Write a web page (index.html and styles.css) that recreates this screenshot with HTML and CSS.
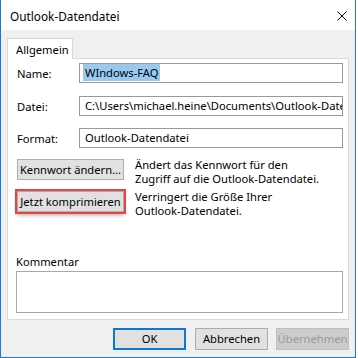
FILE: index.html
```html
<!DOCTYPE html>
<html lang="de">
<head>
<meta charset="utf-8">
<title>Outlook-Datendatei</title>
<link rel="stylesheet" href="styles.css">
</head>
<body>
<div class="window">
  <div class="titlebar">
    <span class="title">Outlook-Datendatei</span>
    <svg class="close" width="10" height="10" viewBox="0 0 10 10"><path d="M0.5 0.5L9.5 9.5M9.5 0.5L0.5 9.5" stroke="#000" stroke-width="1" fill="none"/></svg>
  </div>
  <div class="content">
    <div class="tabs"><div class="tab">Allgemein</div></div>
    <div class="panel">
      <div class="row row-name">
        <span class="label">Name:</span>
        <div class="input"><span class="sel">WIndows-FAQ</span></div>
      </div>
      <div class="row row-file">
        <span class="label">Datei:</span>
        <div class="input">C:\Users\michael.heine\Documents\Outlook-Datendatei.pst</div>
      </div>
      <div class="row row-format">
        <span class="label">Format:</span>
        <div class="input">Outlook-Datendatei</div>
      </div>
      <div class="action action-pw">
        <div class="btn">Kennwort ändern...</div>
        <p class="desc">Ändert das Kennwort für den<br>Zugriff auf die Outlook-Datendatei.</p>
      </div>
      <div class="action action-compact">
        <div class="btn btn-marked">Jetzt komprimieren</div>
        <p class="desc">Verringert die Größe Ihrer<br>Outlook-Datendatei.</p>
      </div>
      <div class="comment-label">Kommentar</div>
      <div class="comment"></div>
    </div>
    <div class="footer">
      <div class="btn btn-default">OK</div>
      <div class="btn">Abbrechen</div>
      <div class="btn btn-disabled">Übernehmen</div>
    </div>
  </div>
</div>
</body>
</html>
```

FILE: styles.css
```css
* { box-sizing: border-box; }
html, body { margin: 0; padding: 0; background: #fff; }
body {
  font-family: "Noto Sans", "Open Sans", sans-serif;
  font-size: 11.2px;
  color: #000;
  width: 358px;
  height: 358px;
  overflow: hidden;
}
.window {
  width: 356px;
  height: 358px;
  border-left: 1px solid #1b7bd2;
  border-right: 1px solid #1b7bd2;
  border-bottom: 1px solid #1b7bd2;
  background: #f0f0f0;
  display: flex;
  flex-direction: column;
}
.titlebar {
  height: 30px;
  background: #fff;
  display: flex;
  align-items: center;
  padding: 0 8px 0 9px;
  flex: none;
}
.title { flex: 1; line-height: 16px; margin-top: 1px; font-size: 11.8px; }
.close { margin-top: 1px; }
.content {
  flex: 1;
  display: flex;
  flex-direction: column;
  padding: 8px 6px 0 6px;
}
.tabs { display: flex; height: 20px; position: relative; z-index: 1; }
.tab {
  width: 66px;
  height: 21px;
  background: #fff;
  border: 1px solid #d9d9d9;
  border-bottom: none;
  padding: 3px 0 0 8px;
  line-height: 16px;
}
.panel {
  width: 342px;
  height: 262px;
  background: #fff;
  border: 1px solid #d9d9d9;
  padding: 4px 5px 0 8px;
  display: flex;
  flex-direction: column;
}
.row { display: flex; align-items: center; height: 20px; flex: none; }
.row-file { margin-top: 13px; }
.row-format { margin-top: 12px; }
.label { width: 63px; flex: none; padding-left: 1px; }
.input {
  width: 265px;
  height: 20px;
  border: 1px solid #999;
  background: #fff;
  padding: 1px 0 0 5px;
  line-height: 16px;
  white-space: nowrap;
  overflow: hidden;
}
.sel { background: #99c9ef; padding: 1px 1px 1px 2px; margin-left: -2px; }
.action { display: flex; align-items: flex-start; height: 21px; flex: none; }
.action-pw { margin-top: 11px; }
.action-compact { margin-top: 11px; }
.btn {
  height: 21px;
  background: #e1e1e1;
  border: 1px solid #adadad;
  display: flex;
  align-items: center;
  justify-content: center;
  line-height: 16px;
  white-space: nowrap;
}
.action .btn { width: 107px; flex: none; margin-left: 1px; }
.btn-marked {
  outline: 2px solid #ea4347;
  box-shadow: 0 3px 4px rgba(0,0,0,0.35);
}
.desc {
  margin: -1px 0 0 11px;
  line-height: 14px;
}
.comment-label { margin-top: 42px; line-height: 16px; flex: none; }
.comment {
  margin-top: 1px;
  width: 327px;
  height: 42px;
  border: 1px solid #a8a8a8;
  background: #fff;
  flex: none;
}
.footer {
  display: flex;
  justify-content: flex-end;
  gap: 8px;
  margin-top: 8px;
}
.footer .btn { width: 73px; height: 22px; }
.btn-default { border: 2px solid #0a78d7; margin-right: 1px; }
.btn-disabled { background: #cccccc; border-color: #bfbfbf; color: #9a9a9a; }
```
